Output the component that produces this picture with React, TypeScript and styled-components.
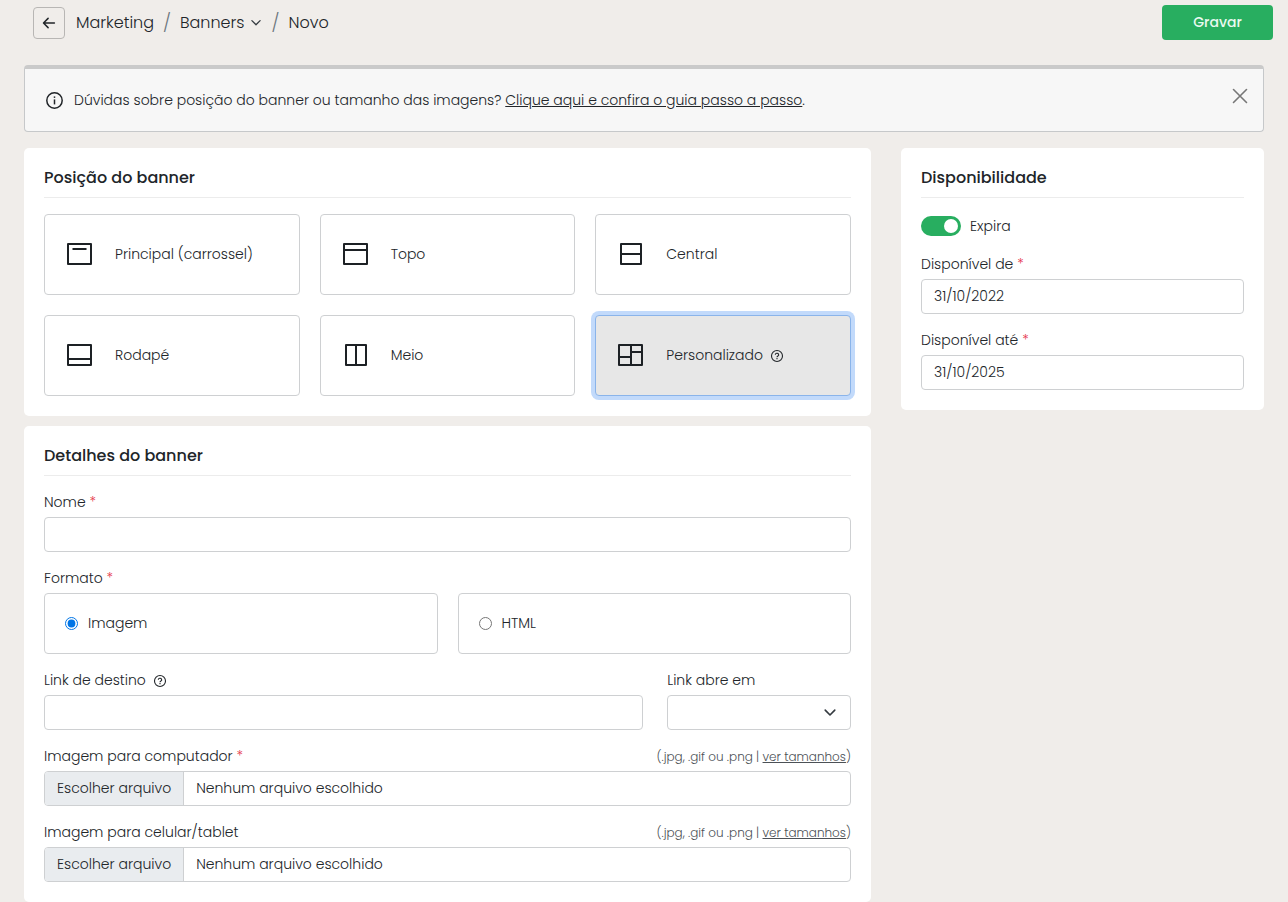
import React, { useState } from 'react';
import type { ReactNode } from 'react';
import styled, { createGlobalStyle, css } from 'styled-components';

const GlobalStyle = createGlobalStyle`
  *, *::before, *::after { box-sizing: border-box; }
  body {
    margin: 0;
    background: #f0edea;
    color: #212529;
    font-family: Poppins, Inter, 'Open Sans', sans-serif;
    font-size: 14px;
    font-weight: 300;
    line-height: 21px;
  }
  button, input, select { font: inherit; color: inherit; }
`;

const TopBar = styled.header`
  display: flex;
  align-items: flex-start;
  justify-content: space-between;
  padding: 5px 15px 0 33px;
`;

const Breadcrumb = styled.nav`
  display: flex;
  align-items: center;
  gap: 9px;
  padding-top: 2px;
  font-size: 16px;
  line-height: 32px;
`;

const BackButton = styled.button`
  display: flex;
  align-items: center;
  justify-content: center;
  width: 32px;
  height: 32px;
  margin-right: 2px;
  padding: 0;
  border: 1px solid #b8b6b4;
  border-radius: 4px;
  background: transparent;
  cursor: pointer;
`;

const CrumbLink = styled.a`
  display: inline-flex;
  align-items: center;
  gap: 6px;
  color: inherit;
  text-decoration: none;
`;

const Slash = styled.span`
  color: #6c757d;
  font-size: 18px;
`;

const SaveButton = styled.button`
  width: 111px;
  height: 35px;
  padding: 0;
  border: 0;
  border-radius: 4px;
  background: #28ae60;
  color: #e9f9ef;
  font-weight: 500;
  cursor: pointer;
`;

const Page = styled.main`
  padding: 25px 24px 0;
`;

const Alert = styled.div`
  display: flex;
  align-items: center;
  gap: 10px;
  height: 67px;
  margin-bottom: 16px;
  padding: 0 15px 0 20px;
  border: 1px solid #c6c8ca;
  border-top: 4px solid #cacaca;
  border-radius: 4px;
  background: #f7f7f7;

  p { flex: 1; margin: 0; }
  a { color: inherit; }
`;

const CloseButton = styled.button`
  display: flex;
  align-self: flex-start;
  margin-top: 19px;
  padding: 0;
  border: 0;
  background: none;
  color: #777;
  cursor: pointer;
`;

const Columns = styled.div`
  display: grid;
  grid-template-columns: minmax(0, 7fr) minmax(0, 3fr);
  gap: 30px;
  align-items: start;
`;

const Stack = styled.div`
  display: grid;
  gap: 10px;
`;

const Card = styled.section`
  padding: 18px 20px 20px;
  border-radius: 5px;
  background: #fff;
`;

const CardTitle = styled.h2`
  margin: 0 0 16px;
  padding-bottom: 7px;
  border-bottom: 1px solid #ececec;
  font-size: 16px;
  font-weight: 500;
  line-height: 24px;
`;

const Options = styled.div`
  display: grid;
  grid-template-columns: repeat(3, minmax(0, 1fr));
  gap: 20px;
`;

const Option = styled.button<{ $active: boolean }>`
  display: flex;
  align-items: center;
  gap: 22px;
  height: 81px;
  padding: 0 22px;
  border: 1px solid #ced0d2;
  border-radius: 4px;
  background: #fff;
  text-align: left;
  cursor: pointer;

  ${({ $active }) => $active && css`
    border-color: #8ab4ea;
    background: #e7e7e7;
    box-shadow: 0 0 0 4px #c2dafb;
  `}
`;

const WithHelp = styled.span`
  display: inline-flex;
  align-items: center;
  gap: 7px;
`;

const Fields = styled.div`
  display: grid;
  grid-template-columns: repeat(12, minmax(0, 1fr));
  gap: 16px 24px;
`;

const Field = styled.div<{ $span?: number }>`
  grid-column: span ${({ $span }) => $span ?? 12};
  display: grid;
  gap: 4px;
`;

const FormatGroup = styled.fieldset`
  grid-column: span 12;
  min-width: 0;
  margin: 0;
  padding: 0;
  border: 0;

  legend { padding: 0 0 4px; }
`;

const FormatChoices = styled.div`
  display: grid;
  grid-template-columns: repeat(2, minmax(0, 1fr));
  gap: 20px;
`;

const FormatChoice = styled.label`
  display: flex;
  align-items: center;
  gap: 10px;
  height: 61px;
  padding: 0 20px;
  border: 1px solid #ced0d2;
  border-radius: 4px;

  input { width: 13px; height: 13px; margin: 0; accent-color: #0075e6; }
`;

const LabelRow = styled.div`
  display: flex;
  align-items: baseline;
  justify-content: space-between;
`;

const Required = styled.span`
  color: #e5344a;
`;

const Hint = styled.span`
  color: #4c5156;
  font-size: 12px;

  a { color: inherit; }
`;

const controlBox = css`
  width: 100%;
  height: 35px;
  border: 1px solid #ced0d2;
  border-radius: 4px;
  background: #fff;
`;

const TextInput = styled.input`
  ${controlBox}
  padding: 0 12px;
`;

const SelectWrap = styled.div`
  display: grid;
  align-items: center;

  select, svg { grid-area: 1 / 1; }
  svg { justify-self: end; margin-right: 14px; pointer-events: none; }
`;

const Select = styled.select`
  ${controlBox}
  padding: 0 36px 0 12px;
  appearance: none;
`;

const FileBox = styled.label`
  ${controlBox}
  display: flex;
  align-items: stretch;
  overflow: hidden;
  line-height: 33px;
  cursor: pointer;

  input {
    width: 0;
    height: 0;
    opacity: 0;
  }
`;

const FileButton = styled.span`
  padding: 0 12px;
  border-right: 1px solid #ced0d2;
  background: #e9ecef;
`;

const FileName = styled.span`
  padding: 0 12px;
`;

const SwitchRow = styled.label`
  grid-column: span 12;
  display: flex;
  align-items: center;
  gap: 9px;
  height: 24px;
`;

const Switch = styled.input`
  display: flex;
  align-items: center;
  width: 40px;
  height: 20px;
  margin: 0;
  padding: 0 3px;
  border-radius: 10px;
  background: #b8bcc0;
  appearance: none;
  cursor: pointer;

  &::before {
    content: '';
    width: 14px;
    height: 14px;
    border-radius: 50%;
    background: #fff;
  }
  &:checked { justify-content: flex-end; background: #28ae60; }
`;

const ArrowLeft = () => (
  <svg width="16" height="16" viewBox="0 0 16 16" fill="none" stroke="#212529" strokeWidth="1.5"
    strokeLinecap="round" strokeLinejoin="round" aria-hidden>
    <path d="M13.4 8H2.6M7.1 3.4L2.5 8l4.6 4.6" />
  </svg>
);

const Chevron = ({ size, width }: { size: number; width: number }) => (
  <svg width={size} height={size} viewBox="0 0 12 12" fill="none" stroke="#343a40" strokeWidth={width}
    strokeLinecap="round" strokeLinejoin="round" aria-hidden>
    <path d="M1.9 3.6L6 7.7l4.1-4.1" />
  </svg>
);

const InfoIcon = () => (
  <svg width="19" height="19" viewBox="0 0 19 19" fill="none" stroke="#212529" strokeWidth="1.5" aria-hidden>
    <circle cx="9.5" cy="9.5" r="7.7" />
    <path d="M9.5 8.4v5" />
    <path d="M9.5 5.4v1.5" />
  </svg>
);

const HelpIcon = () => (
  <svg width="14" height="14" viewBox="0 0 14 14" fill="none" stroke="#212529" strokeWidth="1.1" aria-hidden>
    <circle cx="7" cy="7" r="5.5" />
    <path d="M5.3 5.8a1.7 1.5 0 1 1 2.6 1.2c-.6.4-.9.6-.9 1.2" />
    <path d="M7 9v1.2" />
  </svg>
);

const CloseIcon = () => (
  <svg width="16" height="16" viewBox="0 0 16 16" fill="none" stroke="currentColor" strokeWidth="1.6"
    strokeLinecap="round" aria-hidden>
    <path d="M1.5 1.5l13 13M14.5 1.5l-13 13" />
  </svg>
);

const wideFrame = 'M1 1h23v20H1z';
const squareFrame = 'M3 1h20v20H3z';

const positions: { id: string; label: string; path: string; help?: boolean }[] = [
  { id: 'principal', label: 'Principal (carrossel)', path: `${wideFrame}M5.5 6h14` },
  { id: 'topo', label: 'Topo', path: `${wideFrame}M1 7h23` },
  { id: 'central', label: 'Central', path: `${squareFrame}M3 11h20` },
  { id: 'rodape', label: 'Rodapé', path: `${wideFrame}M1 15h23` },
  { id: 'meio', label: 'Meio', path: `${squareFrame}M13 1v20` },
  { id: 'personalizado', label: 'Personalizado', path: `${wideFrame}M13 1v20M1 13h12M13 8h11`, help: true },
];

const PositionIcon = ({ path }: { path: string }) => (
  <svg width="26" height="23" viewBox="0 0 26 23" fill="none" stroke="#1d2125" strokeWidth="2"
    strokeLinejoin="round" aria-hidden>
    <path d={path} />
  </svg>
);

const Star = () => <Required> *</Required>;

function FileField({ id, label, required }: { id: string; label: ReactNode; required?: boolean }) {
  return (
    <Field>
      <LabelRow>
        <label htmlFor={id}>{label}{required && <Star />}</label>
        <Hint>(.jpg, .gif ou .png | <a href="#tamanhos">ver tamanhos</a>)</Hint>
      </LabelRow>
      <FileBox>
        <FileButton>Escolher arquivo</FileButton>
        <FileName>Nenhum arquivo escolhido</FileName>
        <input id={id} type="file" />
      </FileBox>
    </Field>
  );
}

export default function App() {
  const [position, setPosition] = useState('personalizado');

  return (
    <>
      <GlobalStyle />
      <TopBar>
        <Breadcrumb aria-label="Navegação">
          <BackButton type="button" aria-label="Voltar"><ArrowLeft /></BackButton>
          <CrumbLink href="#marketing">Marketing</CrumbLink>
          <Slash>/</Slash>
          <CrumbLink href="#banners">Banners <Chevron size={12} width={1.3} /></CrumbLink>
          <Slash>/</Slash>
          <span>Novo</span>
        </Breadcrumb>
        <SaveButton type="button">Gravar</SaveButton>
      </TopBar>

      <Page>
        <Alert role="status">
          <InfoIcon />
          <p>
            Dúvidas sobre posição do banner ou tamanho das imagens?{' '}
            <a href="#guia">Clique aqui e confira o guia passo a passo</a>.
          </p>
          <CloseButton type="button" aria-label="Fechar"><CloseIcon /></CloseButton>
        </Alert>

        <Columns>
          <Stack>
            <Card>
              <CardTitle>Posição do banner</CardTitle>
              <Options>
                {positions.map(({ id, label, path, help }) => (
                  <Option
                    key={id}
                    type="button"
                    $active={id === position}
                    aria-pressed={id === position}
                    onClick={() => setPosition(id)}
                  >
                    <PositionIcon path={path} />
                    <WithHelp>{label}{help && <HelpIcon />}</WithHelp>
                  </Option>
                ))}
              </Options>
            </Card>

            <Card>
              <CardTitle>Detalhes do banner</CardTitle>
              <Fields>
                <Field>
                  <label htmlFor="nome">Nome<Star /></label>
                  <TextInput id="nome" type="text" />
                </Field>
                <FormatGroup>
                  <legend>Formato<Star /></legend>
                  <FormatChoices>
                    <FormatChoice><input type="radio" name="formato" defaultChecked />Imagem</FormatChoice>
                    <FormatChoice><input type="radio" name="formato" />HTML</FormatChoice>
                  </FormatChoices>
                </FormatGroup>
                <Field $span={9}>
                  <label htmlFor="link"><WithHelp>Link de destino <HelpIcon /></WithHelp></label>
                  <TextInput id="link" type="text" />
                </Field>
                <Field $span={3}>
                  <label htmlFor="alvo">Link abre em</label>
                  <SelectWrap>
                    <Select id="alvo" defaultValue=""><option value="" /></Select>
                    <Chevron size={14} width={1.4} />
                  </SelectWrap>
                </Field>
                <FileField id="computador" label="Imagem para computador" required />
                <FileField id="celular" label="Imagem para celular/tablet" />
              </Fields>
            </Card>
          </Stack>

          <Card>
            <CardTitle>Disponibilidade</CardTitle>
            <Fields>
              <SwitchRow><Switch type="checkbox" role="switch" defaultChecked />Expira</SwitchRow>
              <Field>
                <label htmlFor="de">Disponível de<Star /></label>
                <TextInput id="de" type="text" defaultValue="31/10/2022" />
              </Field>
              <Field>
                <label htmlFor="ate">Disponível até<Star /></label>
                <TextInput id="ate" type="text" defaultValue="31/10/2025" />
              </Field>
            </Fields>
          </Card>
        </Columns>
      </Page>
    </>
  );
}
